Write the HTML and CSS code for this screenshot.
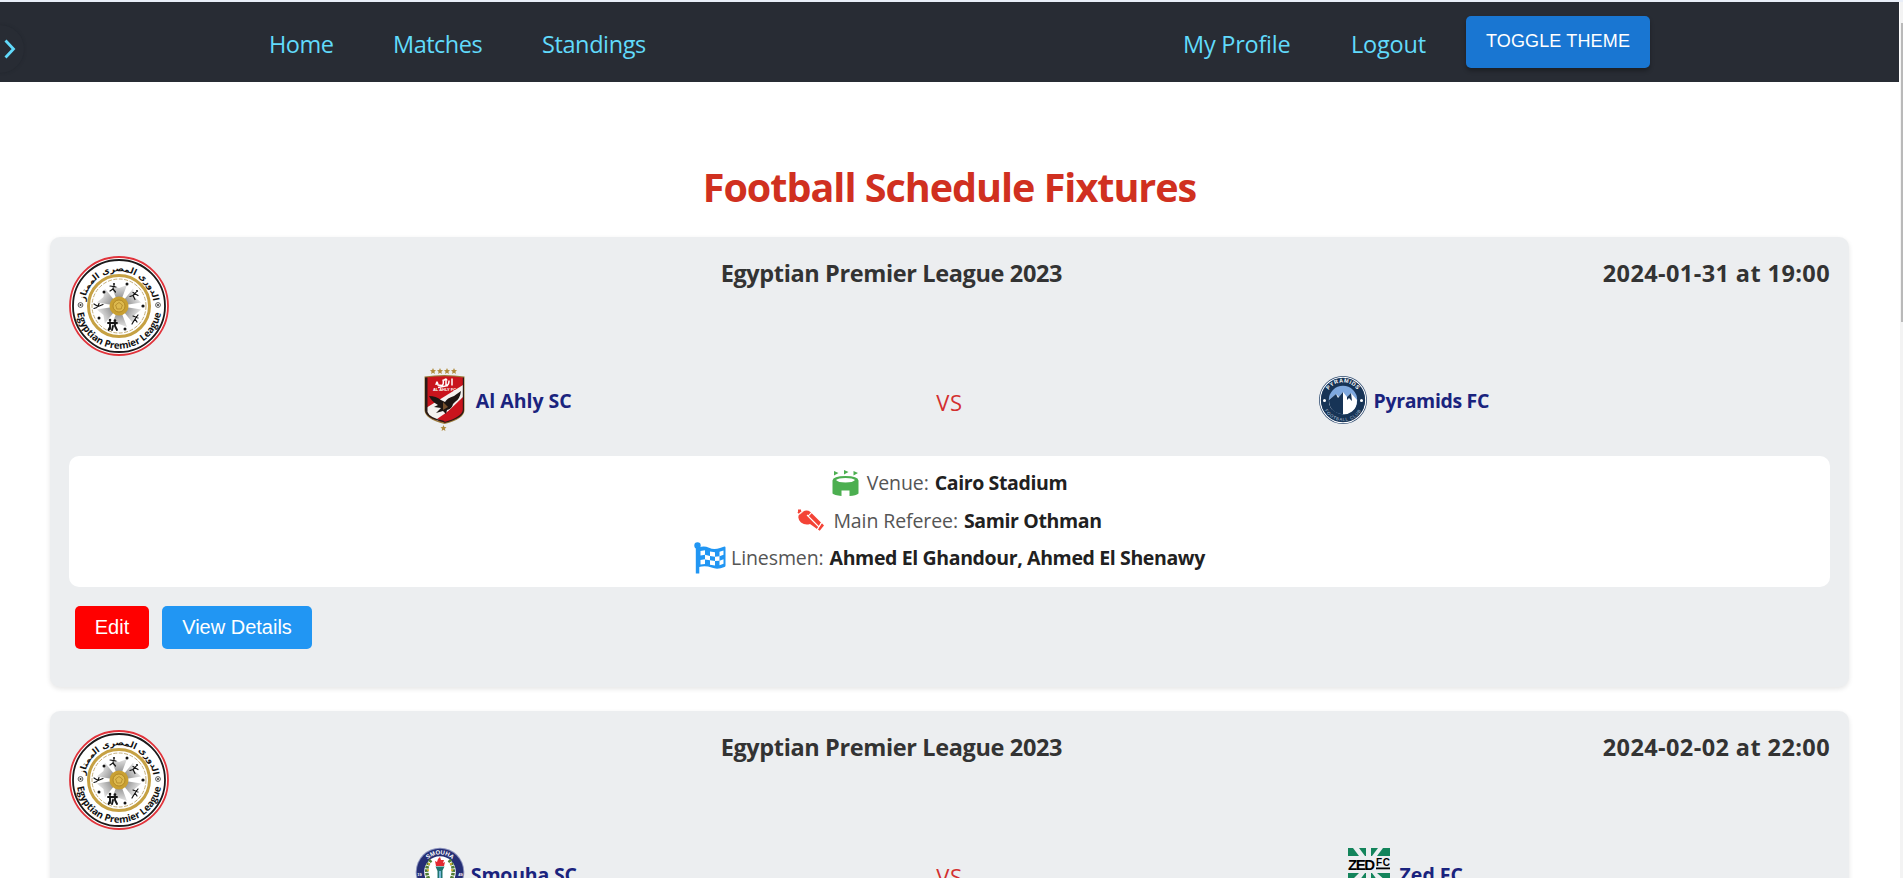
FILE: index.html
```html
<!DOCTYPE html>
<html lang="en">
<head>
<meta charset="utf-8">
<title>Football Schedule Fixtures</title>
<link rel="stylesheet" href="styles.css">
</head>
<body>
<svg class="defs" aria-hidden="true">
  <defs>
    <linearGradient id="ray" x1="0" y1="1" x2="0" y2="0"><stop offset="0" stop-color="#666"/><stop offset="1" stop-color="#e4e4e4"/></linearGradient>
    <path id="arcTop" d="M17.600 61.800a34.500 34.500 0 1 1 64.800 0"/>
    <path id="arcBottom" d="M9 39a42.500 42.500 0 1 0 82 0"/>
    <path id="pTop" d="M7.500 25a17.500 17.500 0 0 1 35 0"/>
    <path id="pBottom" d="M4 25a21 21 0 0 0 42 0"/>
    <symbol id="league" viewBox="0 0 100 100">
      <circle cx="50" cy="50" r="49" fill="#fff" stroke="#e0333b" stroke-width="1.800"/>
      <circle cx="50" cy="50" r="46" fill="#fff" stroke="#1c1a1b" stroke-width="1.800"/>
      <circle cx="50" cy="50" r="30.500" fill="#fff" stroke="#c6a143" stroke-width="3"/>
      <circle cx="50" cy="50" r="27" fill="none" stroke="#a98d45" stroke-width=".7" stroke-dasharray="4 1.500"/>
      <g fill="url(#ray)">
        <path d="M50 50 42 29l8 3 8-3z"/>
        <path d="M50 50 42 29l8 3 8-3z" transform="rotate(60 50 50)"/>
        <path d="M50 50 42 29l8 3 8-3z" transform="rotate(120 50 50)"/>
        <path d="M50 50 42 29l8 3 8-3z" transform="rotate(180 50 50)"/>
        <path d="M50 50 42 29l8 3 8-3z" transform="rotate(240 50 50)"/>
        <path d="M50 50 42 29l8 3 8-3z" transform="rotate(300 50 50)"/>
      </g>
      <circle cx="50" cy="50" r="9.500" fill="#c9a032"/>
      <circle cx="50" cy="50" r="6" fill="#ddb94e" stroke="#a98022" stroke-width=".8"/>
      <path d="m50 46.500 3.400 2.500-1.300 4h-4.200l-1.300-4z" fill="none" stroke="#a98022" stroke-width=".7"/>
      <g fill="#151515">
        <circle cx="58" cy="28" r="1.500"/><circle cx="74" cy="50" r="1.600"/><circle cx="56" cy="73" r="1.500"/><circle cx="30" cy="62" r="1.500"/><circle cx="35" cy="36" r="1.500"/>
        <circle cx="45" cy="28" r="1.100"/><circle cx="68" cy="35" r="1.100"/><circle cx="41" cy="64" r="1.300"/><circle cx="46" cy="64.500" r="1.300"/>
      </g>
      <g fill="none" stroke="#151515" stroke-width="1.200" stroke-linecap="round" stroke-linejoin="round">
        <path d="m45 29.500-1 3.500-3 2m3-2 2.500 3m-5.500-6 6 1M67 36.500l-3 3 2 4m-2-4-3 1m3-4 5 3M25 48l4 2.500 5-2m-5 2 1-3m-5 5 3-1M69 59l-3 4-3 5m3-5 2 3m-4-6 5 2"/>
        <path d="M41 66v7m-2-6h9m-7 4-1.500 3m6.500-8v4l2 4m-4-4-1 4" stroke-width="1.900"/>
      </g>
      <g fill="#fff" stroke="#333" stroke-width=".8"><circle cx="11.500" cy="49" r="2.400"/><circle cx="89" cy="49" r="2.400"/></g>
      <circle cx="11.500" cy="49" r="1" fill="#333"/><circle cx="89" cy="49" r="1" fill="#333"/>
      <text class="crest-ar" text-anchor="middle"><textPath href="#arcTop" startOffset="50%">الدورى المصرى الممتاز</textPath></text>
      <text class="crest-en" text-anchor="middle"><textPath href="#arcBottom" startOffset="50%">Egyptian Premier League</textPath></text>
    </symbol>
  </defs>
</svg>

<nav class="nav">
  <button class="drawer" aria-label="Open menu"><svg viewBox="0 0 12 20" width="12" height="20"><path d="m1.500 1.500 8 8.500-8 8.500" fill="none" stroke="#61dafb" stroke-width="2.800"/></svg></button>
  <div class="links">
    <a class="l-home">Home</a><a class="l-matches">Matches</a><a class="l-standings">Standings</a>
  </div>
  <div class="links account">
    <a class="l-profile">My Profile</a><a class="l-logout">Logout</a>
    <button class="toggle">TOGGLE THEME</button>
  </div>
</nav>
<div class="scrollbar"><div class="thumb"></div></div>

<main class="page">
  <h1>Football Schedule Fixtures</h1>

  <section class="card">
    <header class="head">
      <svg class="league"><use href="#league"/></svg>
      <h2>Egyptian Premier League 2023</h2>
      <time>2024-01-31 at 19:00</time>
    </header>
    <div class="teams">
      <div class="team">
        <svg class="crest tall" viewBox="0 0 50 64">
          <g fill="#b08a3c"><path id="st" d="m13 0 .9 2 2.100.200-1.600 1.500.5 2.300-1.900-1.200L11.100 6l.5-2.300L10 2.200 12.100 2z"/><use href="#st" x="7"/><use href="#st" x="14"/><use href="#st" x="21"/><use href="#st" x="10.500" y="57"/></g>
          <path d="M4.500 8.500q20-3 40 0V42q0 9-20 14Q4.500 51 4.500 42z" fill="#9b7a3a"/>
          <path d="M6 9.500q18.500-2.500 37 0V42q0 8-18.500 12.500Q6 50 6 42z" fill="#c9141d"/>
          <path d="M43 17v12L18 53 8 47 6 40z" fill="#f4f1ef"/>
          <path d="M43 33v9q0 8-18 12l-8-3z" fill="#c9141d"/>
          <path d="M5 9.500h2.500V44q2 6 17 9v1.500Q5 50 5 42zM44 9.500h-1.200V42q-1 7-18.300 12v1Q44 50 44 42z" fill="#2a1c17"/>
          <path d="M9 28q7 0 12 4l4 2q2-4 9-6l7-5q-1 8-6 11l-2 2q-1 5-6 6l-1 4-3-3-7 2 5-5-7-1 4-2q-6-3-9-9z" fill="#1d1512"/>
          <path d="m23 34 5 5-5 3z" fill="#76502c"/>
          <path d="M16 17q1-6 2 0l4 .5q2-1 1-6m3 0v6q3 0 3-5m3-2v7m-14 2 10-2m-4-5q2-3 3 0" fill="none" stroke="#fff" stroke-width="1.500"/>
          <text x="24.500" y="23" class="ahly-text" text-anchor="middle">AL AHLY FC</text>
        </svg>
        <span class="n-ahly">Al Ahly SC</span>
      </div>
      <div class="vs">VS</div>
      <div class="team">
        <svg class="crest" viewBox="0 0 50 50">
          <circle cx="25" cy="25" r="24" fill="#29466c"/><circle cx="25" cy="25" r="22.700" fill="none" stroke="#fff" stroke-width="1.100"/>
          <circle cx="25" cy="25" r="22" fill="#173456"/>
          <circle cx="25" cy="25" r="14.200" fill="#7fa9df"/>
          <path d="m11 25 7-6 3 3 4-5 4 5 4-4 6 7q0 8-5 11.500T25 39.200 16 36t-5-11z" fill="#fff"/>
          <path d="m11 25 7-6 2 4 5-6v22.200Q11 38 11 25zM29 22l4-4 1 8-3-3-2 2z" fill="#173456"/>
          <circle cx="6.500" cy="25.500" r="1.500" fill="#fff"/><circle cx="43.500" cy="25.500" r="1.500" fill="#fff"/>
          <text class="pyr-top" text-anchor="middle"><textPath href="#pTop" startOffset="50%">PYRAMIDS</textPath></text>
          <text class="pyr-bottom" text-anchor="middle"><textPath href="#pBottom" startOffset="50%">FOOTBALL CLUB</textPath></text>
        </svg>
        <span class="n-pyr">Pyramids FC</span>
      </div>
    </div>
    <div class="info">
      <p>
        <svg class="i-venue" viewBox="0 0 27 26"><g fill="#4caf50"><path d="m2 1 4.500 2L2 5.500zM12 0l4.500 2L12 4.500zM21.500 1 26 3l-4.500 2.500z"/><path fill-rule="evenodd" d="M.5 10.500Q1 6 13.500 6t13 4.500v13Q24 25.500 17.500 26v-5.500h-8V26Q2 25 .5 23.500zM4 10q2 2.500 9.500 2.500T23 10q-2-2-9.500-2T4 10z"/></g></svg>
        <span>Venue:</span><strong>Cairo Stadium</strong>
      </p>
      <p>
        <svg class="i-ref" viewBox="0 0 27 22"><g fill="#f44336"><path d="M2.500 5 6 2.500q4-2 7.500.5L24 13.500l-4 6.500q-4-3-7-5-5 1.500-9-1.500Q-.5 9 2.500 5z"/><path d="m24.700 14 2.300 2.500-4.300 5.200-2-1.500z"/></g><path d="m10 6 12 12M15 3.200l-3.600 3.600M25 13l-5 8" fill="none" stroke="#fff" stroke-width="1.100"/><path d="M4 1.500 1 4M1 1.500h3" stroke="#f44336" stroke-width="1.800"/><path d="m2.500 5.500 4-3.500" stroke="#fff" stroke-width=".8"/></svg>
        <span>Main Referee:</span><strong>Samir Othman</strong>
      </p>
      <p>
        <svg class="i-flag" viewBox="0 0 32 32"><g fill="#2196f3"><circle cx="3.500" cy="3.500" r="3.200"/><path d="M1.800 4h3.500v27.500H1.800z"/><path fill-rule="evenodd" d="M5 5.500q5-2 10 .3t11 .2l4.500-1.500q1 0 1 1v18q0 1-1 1.500-7 3-13 .6T5 25zM6.500 9v4.500l4.500-.700v4.500l-4.500.700v4.500l4.500-.600v-4.400l5 .7V14l-5-1.200V8.300zm9.500.5V14l5 .8v-4.500zm0 8.700v4.500l5 .9v-4.500zm5-3.400v4.300l4.500-.4v-4.500zm4.500-5v4.400l4-1.400V8.500zm0 8.900v4.500l4-1.500v-4.400z"/></g></svg>
        <span>Linesmen:</span><strong>Ahmed El Ghandour, Ahmed El Shenawy</strong>
      </p>
    </div>
    <div class="actions"><button class="edit">Edit</button><button class="details">View Details</button></div>
  </section>

  <section class="card">
    <header class="head">
      <svg class="league"><use href="#league"/></svg>
      <h2>Egyptian Premier League 2023</h2>
      <time>2024-02-02 at 22:00</time>
    </header>
    <div class="teams">
      <div class="team">
        <svg class="crest raised" viewBox="0 0 50 50">
          <circle cx="25" cy="25" r="24.300" fill="#8b92bd"/><circle cx="25" cy="25" r="23.300" fill="#252e74"/><circle cx="25" cy="25" r="15.800" fill="#fff"/>
          <g fill="none" stroke="#4f7d35" stroke-width="3.500" stroke-dasharray="2.500 1"><path d="M16 13q-8 9-1 22M34 13q8 9 1 22"/></g>
          <g fill="#e5b32d"><circle cx="14" cy="17" r="1"/><circle cx="36" cy="17" r="1"/><circle cx="13" cy="23" r="1"/><circle cx="37" cy="23" r="1"/></g>
          <path d="m21 19-1-5 2 1 1-3 2-2 1 3 3 0-1 3 2-1-1 4z" fill="#e22931"/>
          <path d="M20.500 19.500h9l-2 4V40h-5V24z" fill="#1f7570"/>
          <path d="M24 24h2v15h-2z" fill="#79b8d7"/>
          <text class="sm-top" text-anchor="middle"><textPath href="#pTop" startOffset="50%">SMOUHA</textPath></text>
          <text x="4.500" y="29" class="sm-year" text-anchor="middle">19</text><text x="45.500" y="29" class="sm-year" text-anchor="middle">49</text>
        </svg>
        <span class="n-smouha">Smouha SC</span>
      </div>
      <div class="vs">VS</div>
      <div class="team">
        <svg class="crest raised" viewBox="0 0 50 50">
          <path d="M4 1h5l6 8H4zM15 1h7v8h-1zM27 1h7l-6 8h-1zM39 1h7v8H33z" fill="#13845b"/>
          <path d="M4 26h11l-8 8H4zM21 26h1v8h-7zM27 26h1l6 8h-7zM33 26h13v8h-4z" fill="#13845b"/>
          <text x="4" y="22.500" class="zed" textLength="27">ZED</text><text x="32" y="18.500" class="zed-fc" textLength="14">FC</text>
          <path d="M32 20.500h14v1.800H32z"/>
        </svg>
        <span class="n-zed">Zed FC</span>
      </div>
    </div>
    <div class="info"></div>
  </section>
</main>
</body>
</html>
```
FILE: styles.css
```css
* { box-sizing: border-box; }
html { overflow: hidden; }
body {
  margin: 0; height: 878px; overflow: hidden; background: #fff;
  border-top: 2px solid #e9eef8;
  font-family: "Open Sans", "Noto Sans", sans-serif; color: #333;
}
h1, h2, p { margin: 0; }
button { border: 0; font-family: "Liberation Sans", Arial, sans-serif; color: #fff; padding: 0; }
.defs { position: absolute; width: 0; height: 0; }

.nav { position: relative; width: 1899px; height: 80px; background: #282c34; display: flex; justify-content: space-between; padding: 3px 249px 0 269px; overflow: hidden; }
.drawer { position: absolute; left: -24px; top: 23px; width: 48px; height: 48px; border-radius: 50%; background: #282c34; box-shadow: 0 0 3px #22262e; display: flex; align-items: center; justify-content: flex-end; padding-right: 8px; }
.links { display: flex; align-items: center; }
.links a { font-size: 23.500px; line-height: 32px; color: #61dafb; white-space: nowrap; letter-spacing: -.5px; }
.l-home { width: 124px; }
.l-matches { width: 149px; }
.links .l-standings { letter-spacing: -.4px; }
.links .l-profile { width: 168px; letter-spacing: -.25px; }
.links .l-logout { width: 115px; letter-spacing: -.2px; }
.toggle { width: 184px; height: 52px; margin-bottom: 4px; border-radius: 5px; background: #1976d2; font-size: 18px; letter-spacing: .15px; white-space: nowrap; box-shadow: 0 3px 4px rgba(0,0,0,.3); }

.scrollbar { position: absolute; right: 0; top: 2px; width: 3px; height: 876px; background: #f3f3f3; padding-top: 21px; }
.thumb { width: 2px; height: 299px; margin-left: 1px; background: #b9b9b9; }

.page { padding: 75px 54px 0 50px; }
h1 { height: 80px; line-height: 60px; text-align: center; font-size: 39.500px; font-weight: 700; letter-spacing: -1px; color: #d03020; white-space: nowrap; }
.card { height: 450px; margin-bottom: 24px; padding: 19px 19px 0 19px; background: #eceef0; border-radius: 10px; box-shadow: 0 2px 5px rgba(0,0,0,.1); }
.head { display: flex; justify-content: space-between; height: 100px; }
.league { width: 100px; height: 100px; margin-right: 11px; }
h2, time { font-size: 23.500px; font-weight: 700; line-height: 35px; letter-spacing: -.37px; color: #333; white-space: nowrap; }
time { letter-spacing: .4px; }
.crest-ar { font: 700 8.600px "DejaVu Sans", sans-serif; fill: #111; }
.crest-en { font: 700 9.600px "Open Sans", sans-serif; fill: #111; }

.teams { display: grid; grid-template-columns: 1fr 54px 1fr; height: 100px; padding: 12px 0 24px; align-items: center; }
.team { display: flex; align-items: center; justify-content: center; gap: 6px; color: #1a237e; font-size: 19.500px; font-weight: 700; white-space: nowrap; }
.n-ahly { letter-spacing: 0; }
.n-pyr { letter-spacing: -.35px; }
.n-smouha { letter-spacing: -.2px; }
.n-zed { letter-spacing: 0; }
.crest { width: 50px; height: 50px; flex: none; }
.crest.tall { height: 64px; }
.crest.raised { margin-top: -4px; }
.vs { text-align: center; font-size: 22px; letter-spacing: .6px; padding-top: 4px; color: #d32f2f; }
.ahly-text { font: 700 4px "Liberation Sans", sans-serif; fill: #fff; }
.pyr-top { font: 700 5.500px "Liberation Sans", sans-serif; letter-spacing: .6px; fill: #fff; }
.pyr-bottom { font: 4.300px "Liberation Sans", sans-serif; letter-spacing: .7px; fill: #b9c9dd; }
.sm-top { font: 700 6px "Liberation Sans", sans-serif; fill: #fff; }
.sm-year { font: 700 4px "Liberation Sans", sans-serif; fill: #fff; }
.zed { font: 700 15px "Liberation Sans", sans-serif; fill: #000; }
.zed-fc { font: 700 10px "Liberation Sans", sans-serif; fill: #000; }

.info { height: 131px; padding: 8px 0; background: #fff; border-radius: 10px; }
.info p { display: flex; align-items: center; justify-content: center; height: 37.500px; font-size: 19.500px; white-space: nowrap; color: #555; letter-spacing: -.1px; }
.info strong { margin-left: 6px; color: #212121; letter-spacing: -.37px; }
.i-venue { width: 27px; height: 26px; margin-right: 8px; }
.i-ref { width: 27px; height: 22px; margin-right: 9px; }
.i-flag { width: 32px; height: 32px; margin-right: 5px; }

.actions { display: flex; gap: 13px; padding: 19px 6px; }
.actions button { height: 43px; border-radius: 5px; font-size: 20px; }
.edit { width: 74px; background: #f00; }
.details { width: 150px; background: #2196f3; }
```
